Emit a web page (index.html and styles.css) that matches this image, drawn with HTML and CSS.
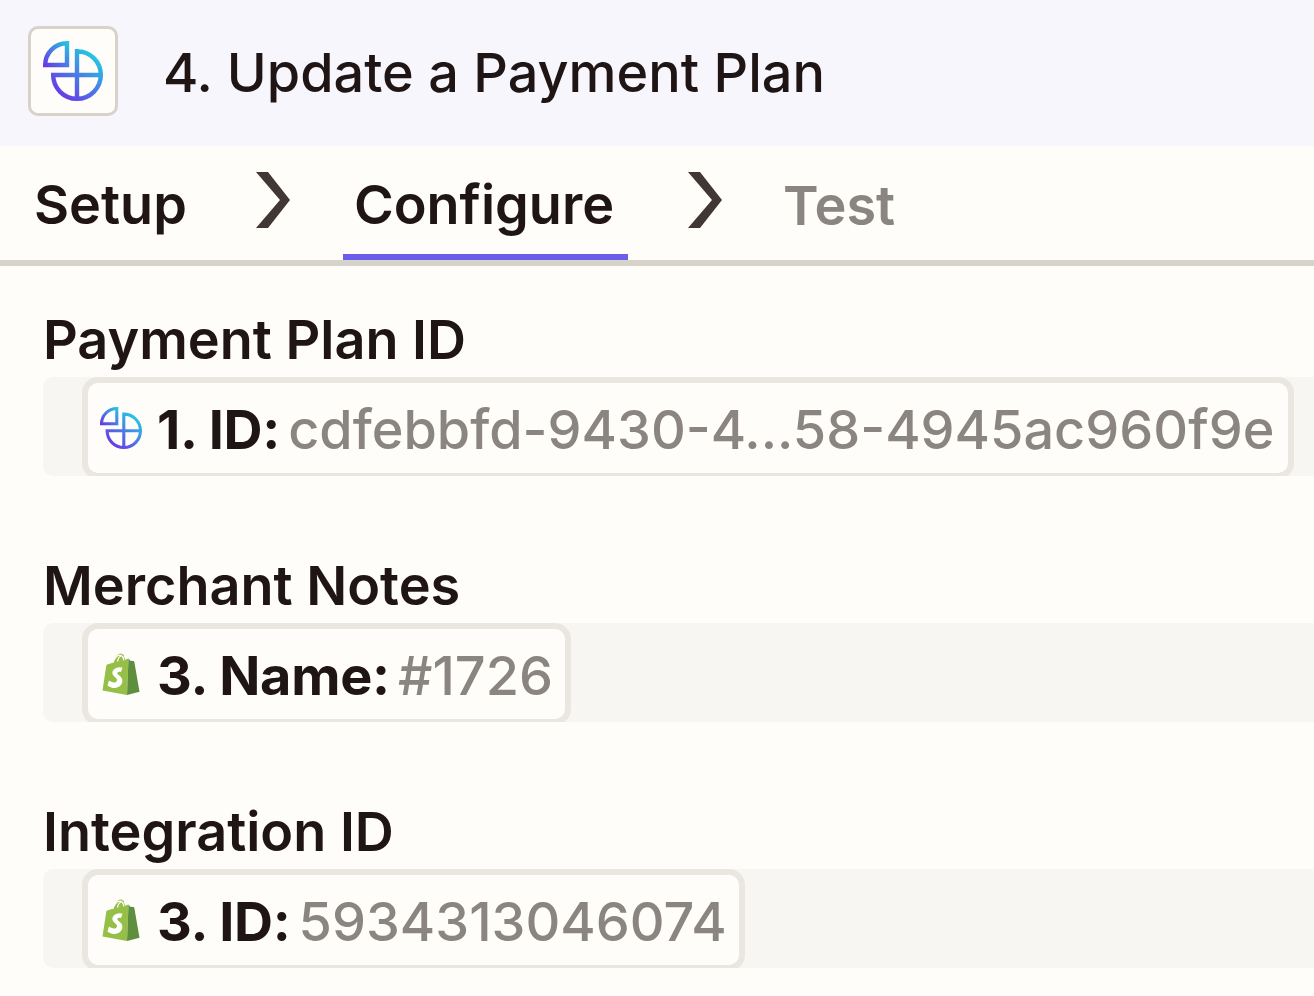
FILE: index.html
```html
<!DOCTYPE html>
<html lang="en">
<head>
<meta charset="utf-8">
<title>Update a Payment Plan</title>
<link rel="stylesheet" href="styles.css">
</head>
<body>
<svg class="defs" width="0" height="0" aria-hidden="true">
  <defs>
    <linearGradient id="gr3" gradientUnits="userSpaceOnUse" x1="26" y1="0" x2="0" y2="26">
      <stop offset="0" stop-color="#22CCE2"/>
      <stop offset="0.5" stop-color="#4A7BE6"/>
      <stop offset="1" stop-color="#6A30E6"/>
    </linearGradient>
    <linearGradient id="gr4" gradientUnits="userSpaceOnUse" x1="54" y1="14" x2="18" y2="58">
      <stop offset="0" stop-color="#22CCE2"/>
      <stop offset="0.5" stop-color="#4A7BE6"/>
      <stop offset="1" stop-color="#6A35E8"/>
    </linearGradient>
    <symbol id="plan" viewBox="0 0 60 60">
      <path d="M24 2.200A21.800 21.800 0 0 0 2.200 24H24Z" fill="none" stroke="url(#gr3)" stroke-width="4.400"/>
      <path d="M34 10.200A23.800 23.800 0 1 1 10.200 34M34 8V60M8 34H60" fill="none" stroke="url(#gr4)" stroke-width="4.400"/>
    </symbol>
    <symbol id="bag" viewBox="0 0 38 42">
      <path d="M26.500 5.500 24 6.200C23 3 21 0.500 18.800 0.500C15 0.500 12 6 10.800 9.800L6 11.300C4.500 11.800 4.400 11.900 4.200 13.300L0.500 37.500L25 42Z" fill="#95BF47"/>
      <path d="M26.500 5.500 25 42 37.500 38.800 32.300 8.700C32.200 8.300 31.800 8 31.500 8L28.300 7.800Z" fill="#5E8E3E"/>
      <path d="M10.800 9.800C12 6 15 2.200 17.500 2.200C20 2.200 21.500 5 21.800 7.300M15.500 8.500C16 6 17.500 3.500 19 3M23.800 6.500C23.500 5 23 3.800 22 3" fill="none" stroke="#fff" stroke-width="1.300"/>
      <path d="M20.500 14.800C18.500 13.800 13.500 13.800 11 17.500C8.800 21.500 12.800 23.800 14.300 25.200C15.800 26.800 14.800 29.500 12.500 29.500C10.200 29.500 8.200 28.300 7 27.500L5.500 32.500C7.500 34.300 10.800 35.300 13.200 35C18 34.300 20.800 31 20.300 27C20 23.500 15.800 22 15.300 20.500C15 18.800 17.800 18.500 19 19Z" fill="#fff"/>
    </symbol>
  </defs>
</svg>
<header class="header">
  <div class="app-box"><svg class="app-icon"><use href="#plan"/></svg></div>
  <h1 class="title">4. Update a Payment Plan</h1>
</header>
<nav class="tabs">
  <span class="tab tab-setup">Setup</span>
  <svg class="chev chev-first" viewBox="0 0 34 56"><path d="M0 0H12L34 28 12 56H0L24 28Z" fill="#413735"/></svg>
  <span class="tab tab-active">Configure</span>
  <svg class="chev chev-second" viewBox="0 0 34 56"><path d="M0 0H12L34 28 12 56H0L24 28Z" fill="#413735"/></svg>
  <span class="tab tab-off">Test</span>
</nav>
<main class="form">
  <section class="field">
    <div class="label">Payment Plan ID</div>
    <div class="input">
      <span class="pill pill-wide">
        <svg class="pill-plan"><use href="#plan"/></svg>
        <b class="key">1. ID:</b><span class="val">cdfebbfd-9430-4...58-4945ac960f9e</span>
      </span>
    </div>
  </section>
  <section class="field">
    <div class="label">Merchant Notes</div>
    <div class="input">
      <span class="pill">
        <svg class="pill-bag"><use href="#bag"/></svg>
        <b class="key">3. Name:</b><span class="val">#1726</span>
      </span>
    </div>
  </section>
  <section class="field">
    <div class="label">Integration ID</div>
    <div class="input">
      <span class="pill">
        <svg class="pill-bag"><use href="#bag"/></svg>
        <b class="key">3. ID:</b><span class="val">5934313046074</span>
      </span>
    </div>
  </section>
</main>
</body>
</html>
```
FILE: styles.css
```css
* { box-sizing: border-box; }
html, body { margin: 0; padding: 0; }
body {
  width: 1314px;
  height: 996px;
  overflow: hidden;
  background: #FFFDF9;
  color: #201515;
  font-family: Inter, "Liberation Sans", sans-serif;
}
.defs { display: block; height: 0; }
.header {
  height: 146px;
  background: #F7F6FD;
  display: flex;
  align-items: center;
  padding: 0 0 0 28px;
  gap: 45px;
}
.app-box {
  width: 90px;
  height: 90px;
  margin-top: -4px;
  background: #FFFDF9;
  border: 3px solid #D7D3C9;
  border-radius: 10px;
  display: flex;
  align-items: center;
  justify-content: center;
}
.app-icon { width: 60px; height: 60px; }
.title {
  margin: 0;
  font-size: 54px;
  font-weight: 500;
  line-height: 64px;
  white-space: nowrap;
}
.tabs {
  height: 120px;
  border-bottom: 6px solid #D6D3CB;
  display: flex;
  align-items: center;
  padding-left: 34px;
}
.tab {
  font-size: 54px;
  font-weight: 600;
  line-height: 64px;
}
.tab-setup { padding-top: 4px; }
.tab-active {
  height: 114px;
  display: flex;
  align-items: center;
  padding: 10px 14px 0 11px;
  border-bottom: 6px solid #6A5FEA;
}
.tab-off { color: #8B8581; margin-left: 61px; padding-top: 5px; }
.chev { width: 34px; height: 56px; flex: none; margin-bottom: 6px; }
.chev-first { margin-left: 69px; margin-right: 53px; }
.chev-second { margin-left: 60px; }
.form { padding-left: 43px; }
.field { height: 246px; padding-top: 43px; }
.label {
  font-size: 54px;
  font-weight: 600;
  line-height: 62px;
  height: 68px;
  white-space: nowrap;
}
.input {
  height: 99px;
  background: #F7F6F3;
  border-radius: 10px 0 0 10px;
  padding-left: 39px;
  display: flex;
  overflow: hidden;
}
.pill {
  height: 102px;
  flex: none;
  display: flex;
  align-items: center;
  background: #FFFDF9;
  border: 6px solid #E9E7E0;
  border-radius: 16px;
  padding: 2px 12px 0 12px;
  white-space: nowrap;
}
.pill-wide { width: 1212px; }
.pill-plan { width: 42px; height: 42px; margin: -2px 15px 0 0; flex: none; }
.pill-bag { width: 38px; height: 42px; margin: -2px 17px 0 2px; flex: none; }
.key {
  font-size: 54px;
  font-weight: 700;
  letter-spacing: -0.25px;
  margin-right: 8px;
}
.val {
  font-size: 54px;
  font-weight: 500;
  color: #8B8581;
}
```
